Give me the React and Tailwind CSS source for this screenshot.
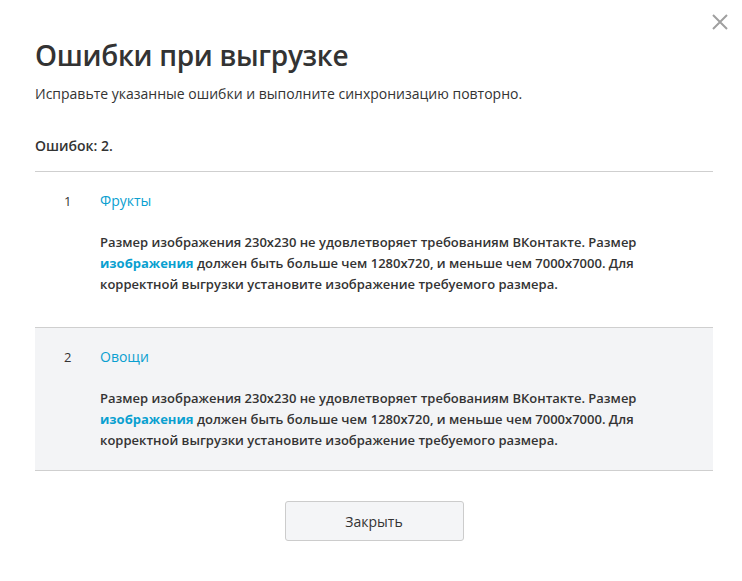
export default function App() {
  const items = [
    { n: 1, name: "Фрукты", cls: "bg-white pb-[32px]" },
    { n: 2, name: "Овощи", cls: "bg-[#f3f4f6] pb-[19px]" },
  ];
  return (
    <div className="relative w-[742px] h-[581px] bg-white text-[#333] font-['Open_Sans',sans-serif]">
      <button className="absolute right-[12px] top-[12px] w-[20px] h-[20px] flex items-center justify-center text-[#a0a0a0]">
        <svg width="18" height="18" viewBox="0 0 18 18" fill="none" stroke="currentColor" strokeWidth="2">
          <path d="M2 2 L16 16 M16 2 L2 16" />
        </svg>
      </button>
      <div className="px-[35px] pt-[36px] w-[748px]">
        <h1 className="text-[28px] leading-[38px] font-semibold tracking-[-0.3px]">Ошибки при выгрузке</h1>
        <p className="mt-[10px] text-[14px] leading-[20px]">Исправьте указанные ошибки и выполните синхронизацию повторно.</p>
        <p className="mt-[32px] text-[14px] leading-[20px] font-semibold">Ошибок: 2.</p>
        <div className="mt-[15px] w-[678px] border-t border-[#cfcfcf]">
          {items.map((it) => (
            <div key={it.n} className={`${it.cls} border-b border-[#cfcfcf] flex pt-[19px]`}>
              <div className="w-[65px] pl-[29px] text-[13px] leading-[20px]">{it.n}</div>
              <div className="flex-1">
                <div className="text-[14px] leading-[20px] text-[#0aa0d0]">{it.name}</div>
                <p className="mt-[21px] text-[13px] leading-[21px] font-semibold text-[#333] w-[560px]">
                  Размер изображения 230x230 не удовлетворяет требованиям ВКонтакте. Размер{" "}
                  <span className="text-[#0aa0d0] font-bold leading-[21px]">изображения</span> должен быть больше чем 1280x720, и меньше чем 7000x7000. Для корректной выгрузки установите изображение требуемого размера.
                </p>
              </div>
            </div>
          ))}
        </div>
        <div className="flex justify-center mt-[30px] w-[678px]">
          <button className="w-[179px] h-[40px] rounded-[3px] border border-[#cccccc] bg-[#f4f5f7] text-[14px] text-[#333]">Закрыть</button>
        </div>
      </div>
    </div>
  );
}
